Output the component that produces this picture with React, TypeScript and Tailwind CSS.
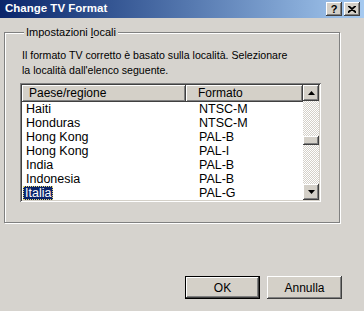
const raised =
  'shadow-[inset_-1px_-1px_#404040,inset_1px_1px_#ffffff,inset_-2px_-2px_#808080,inset_2px_2px_#d4d0c8]';
const sunken =
  'shadow-[inset_1px_1px_#808080,inset_-1px_-1px_#ffffff,inset_2px_2px_#404040,inset_-2px_-2px_#d4d0c8]';

const rows = [
  { country: 'Haiti', format: 'NTSC-M' },
  { country: 'Honduras', format: 'NTSC-M' },
  { country: 'Hong Kong', format: 'PAL-B' },
  { country: 'Hong Kong', format: 'PAL-I' },
  { country: 'India', format: 'PAL-B' },
  { country: 'Indonesia', format: 'PAL-B' },
  { country: 'Italia', format: 'PAL-G' },
];

function Arrow({ up }: { up: boolean }) {
  return (
    <svg width="7" height="4" viewBox="0 0 7 4">
      {up ? <polygon points="3.5,0 7,4 0,4" fill="#000" /> : <polygon points="0,0 7,0 3.5,4" fill="#000" />}
    </svg>
  );
}

export default function App() {
  return (
    <div className="w-[364px] h-[311px] bg-[#d6d3ce] flex flex-col overflow-hidden text-[11px] text-black font-['Liberation_Sans',Arial,sans-serif]">
      <div className="h-[18px] shrink-0 flex items-center pl-[5px] pr-[4px] bg-gradient-to-r from-[#0a246a] to-[#a6caf0]">
        <span className="flex-1 text-white font-bold text-[11.5px] leading-none">Change TV Format</span>
        <div className={`w-[16px] h-[14px] bg-[#d4d0c8] ${raised} flex items-center justify-center font-bold text-[11px] leading-none`}>
          ?
        </div>
        <div className={`ml-[2px] w-[16px] h-[14px] bg-[#d4d0c8] ${raised} flex items-center justify-center`}>
          <svg width="8" height="7" viewBox="0 0 8 7">
            <path d="M0 0 L8 7 M1 0 L8 6 M8 0 L0 7 M7 0 L0 6" stroke="#000" strokeWidth="1.2" />
          </svg>
        </div>
      </div>

      <fieldset className="ml-[4px] mt-[7px] w-[336px] h-[198px] border border-[#808080] shadow-[inset_1px_1px_#ffffff,1px_1px_#ffffff] pl-[15px] pr-0 pt-[9px]">
        <legend className="ml-[4px] px-[2px] leading-[14px] bg-[#d6d3ce]">
          Impostazioni <span className="underline">l</span>ocali
        </legend>
        <p className="leading-[15px] pl-[2px] text-[10.6px]">
          Il formato TV corretto è basato sulla località. Selezionare
          <br />
          la località dall'elenco seguente.
        </p>

        <div className={`mt-[5px] w-[301px] h-[119px] bg-white p-[2px] flex text-[12px] ${sunken}`}>
          <div className="flex-1 flex flex-col">
            <div className="h-[17px] flex">
              <div className={`w-[164px] bg-[#d4d0c8] ${raised} pl-[7px] leading-[17px]`}>Paese/regione</div>
              <div className={`flex-1 bg-[#d4d0c8] ${raised} pl-[12px] leading-[17px]`}>Formato</div>
            </div>
            {rows.map((r, i) => (
              <div key={i} className="h-[14px] flex leading-[14px] text-[12.5px]">
                <div className="w-[164px] pl-[1px]">
                  {i === rows.length - 1 ? (
                    <span className="inline-block bg-[#0a246a] text-white px-[2px] h-[14px] outline-1 outline-dotted outline-[#e8d870] -outline-offset-1">
                      {r.country}
                    </span>
                  ) : (
                    <span className="pl-[3px]">{r.country}</span>
                  )}
                </div>
                <div className="flex-1 pl-[13px]">{r.format}</div>
              </div>
            ))}
          </div>
          <div className="w-[16px] flex flex-col bg-[repeating-conic-gradient(#d4d0c8_0%_25%,#ffffff_0%_50%)] bg-[length:2px_2px]">
            <div className={`h-[16px] bg-[#d4d0c8] ${raised} flex items-center justify-center`}>
              <Arrow up />
            </div>
            <div className="h-[35px]" />
            <div className={`h-[9px] bg-[#d4d0c8] ${raised}`} />
            <div className="flex-1" />
            <div className={`h-[16px] bg-[#d4d0c8] ${raised} flex items-center justify-center`}>
              <Arrow up={false} />
            </div>
          </div>
        </div>
      </fieldset>

      <div className="mt-[53px] flex gap-[7px] pl-[185px] text-[12px]">
        <button className="w-[75px] h-[23px] bg-[#d4d0c8] border border-black shadow-[inset_-1px_-1px_#404040,inset_1px_1px_#ffffff,inset_-2px_-2px_#808080] leading-none">
          OK
        </button>
        <button className={`w-[75px] h-[23px] bg-[#d4d0c8] ${raised} leading-none`}>Annulla</button>
      </div>
    </div>
  );
}
